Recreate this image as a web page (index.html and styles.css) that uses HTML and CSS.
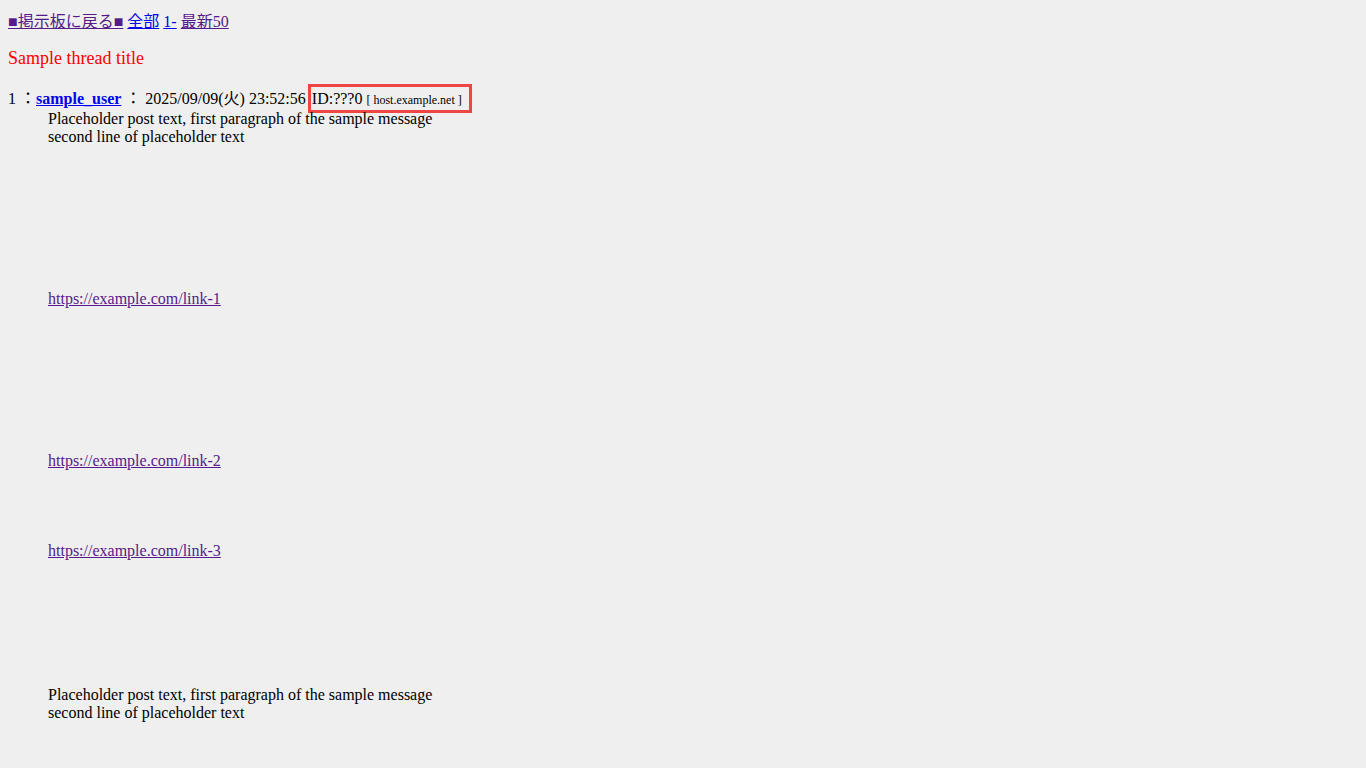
FILE: index.html
```html
<!DOCTYPE html>
<html lang="ja">

<head>
    <meta charset="UTF-8">
    <title>Sample thread</title>
    <link rel="stylesheet" href="styles.css">
</head>

<body>
    <!-- Navegacao -->
    <div class="nav">
        <a href="#" class="visited">■掲示板に戻る■</a>
        <a href="#">全部</a>
        <a href="#">1-</a>
        <a href="#" class="visited">最新50</a>
    </div>

    <h1 class="titulo">Sample thread title</h1>

    <dl class="thread">
        <dt class="cabecalho">
            1 ：<a href="#" class="nome">sample_user</a> ： 2025/09/09(火) 23:52:56
            <span class="id-box">ID:???0 <span class="host">[ host.example.net ]</span></span>
        </dt>
        <dd class="corpo">
            Placeholder post text, first paragraph of the sample message<br>
            second line of placeholder text<br>
            <br><br><br><br><br><br><br><br>
            <a href="#" class="visited">https://example.com/link-1</a><br>
            <br><br><br><br><br><br><br><br>
            <a href="#" class="visited">https://example.com/link-2</a><br>
            <br><br><br><br>
            <a href="#" class="visited">https://example.com/link-3</a><br>
            <br><br><br><br><br><br><br>
            Placeholder post text, first paragraph of the sample message<br>
            second line of placeholder text<br>
            <br><br><br><br><br><br><br><br>
        </dd>
    </dl>
</body>

</html>
```

FILE: styles.css
```css
body {
    font-family: "Liberation Serif", "Noto Sans CJK JP", serif;
    font-size: 16px;
    background: #efefef;
    color: #000;
    margin: 8px;
    line-height: 18px;
}

a {
    color: #0000ee;
}

a.visited {
    color: #551a8b;
}

.nav {
    margin-top: 5px;
}

.titulo {
    color: #ff0000;
    font-size: 18px;
    font-weight: normal;
    margin: 16px 0 20px 0;
    line-height: 22px;
}

.thread {
    margin: 0;
}

.cabecalho {
    line-height: 19px;
}

.nome {
    font-weight: bold;
}

.id-box {
    border: 3px solid #f04545;
    padding: 3px 7px 3px 1px;
    margin-left: -2px;
}

.host {
    font-size: 12px;
}

.corpo {
    margin-left: 40px;
    margin-top: 0;
}
```
